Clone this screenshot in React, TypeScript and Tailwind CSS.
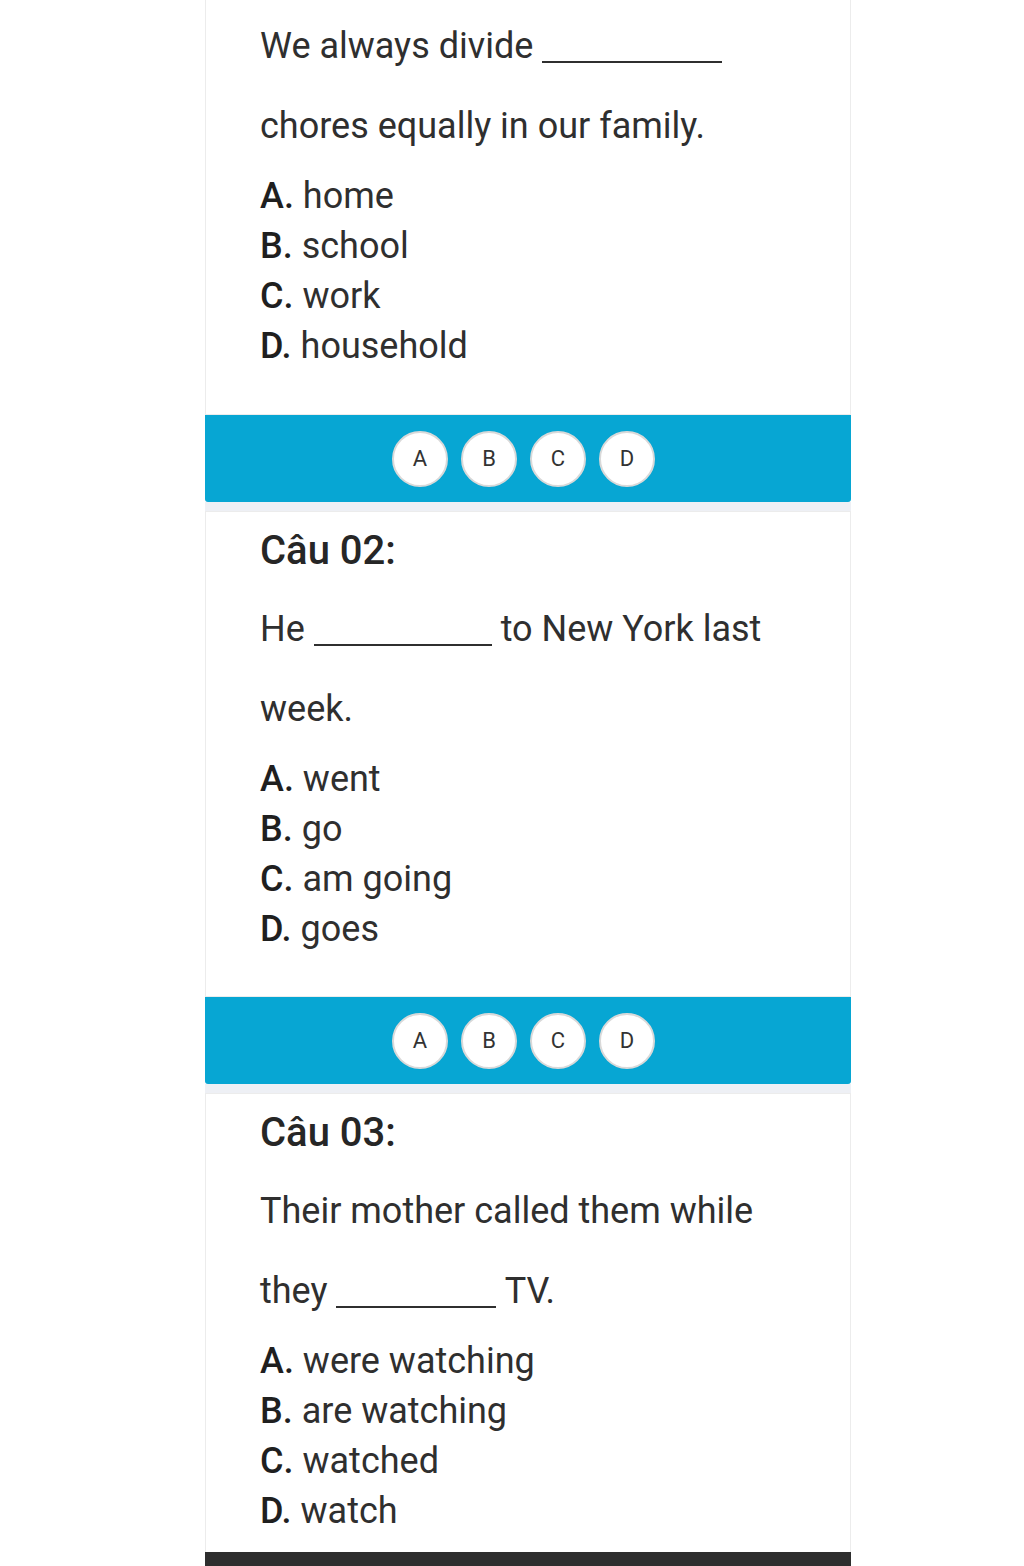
import React from 'react';

type Question = {
  title?: string;
  lines: React.ReactNode[];
  options: string[];
};

const Blank = ({ width }: { width: number }) => (
  <span
    className="inline-block border-b-2 border-[#2f2f2f] align-[-5px]"
    style={{ width }}
  />
);

const questions: Question[] = [
  {
    lines: [
      <>We always divide <Blank width={180} /></>,
      <>chores equally in our family.</>,
    ],
    options: ['home', 'school', 'work', 'household'],
  },
  {
    title: 'Câu 02:',
    lines: [
      <>He <Blank width={178} /> to New York last</>,
      <>week.</>,
    ],
    options: ['went', 'go', 'am going', 'goes'],
  },
  {
    title: 'Câu 03:',
    lines: [
      <>Their mother called them while</>,
      <>they <Blank width={160} /> TV.</>,
    ],
    options: ['were watching', 'are watching', 'watched', 'watch'],
  },
];

const letters = ['A', 'B', 'C', 'D'];

const AnswerBar = () => (
  <div className="h-[87px] bg-[#07a6d3] rounded-b-[3px] flex items-center justify-center gap-[13px] pr-[9px]">
    {letters.map((l) => (
      <div
        key={l}
        className="w-[56px] h-[56px] rounded-full bg-white border-2 border-[#d9d9d9] flex items-center justify-center text-[22px] text-[#333]"
      >
        {l}
      </div>
    ))}
  </div>
);

const QuestionCard = ({ q, first, last }: { q: Question; first: boolean; last: boolean }) => (
  <div
    className={`bg-white border border-[#ececec] px-[54px] ${first ? 'pt-[6px] border-t-0' : 'pt-[14px]'} ${last ? 'pb-[16px] border-b-0' : first ? 'pb-[43px]' : 'pb-[42px]'}`}
  >
    {q.title && (
      <h2 className="text-[40px] leading-[50px] font-medium text-[#262626] mb-[13px]">{q.title}</h2>
    )}
    {q.lines.map((line, i) => (
      <p key={i} className="text-[36px] leading-[80px] text-[#2f2f2f]">
        {line}
      </p>
    ))}
    <ul className="mt-[5px]">
      {q.options.map((opt, i) => (
        <li key={i} className="text-[36px] leading-[50px] text-[#2f2f2f]">
          <span className="font-medium text-[#1f1f1f]">{letters[i]}.</span> {opt}
        </li>
      ))}
    </ul>
  </div>
);

export default function App() {
  return (
    <div className="min-h-screen bg-white" style={{ fontFamily: 'Roboto, "Noto Sans", sans-serif' }}>
      <div className="ml-[205px] w-[646px]">
        {questions.map((q, i) => (
          <React.Fragment key={i}>
            <QuestionCard q={q} first={i === 0} last={i === questions.length - 1} />
            {i < questions.length - 1 && (
              <>
                <AnswerBar />
                <div className="h-[9px] bg-[#eef0f5]" />
              </>
            )}
          </React.Fragment>
        ))}
        <div className="h-[40px] bg-[#2e2e2e]" />
      </div>
    </div>
  );
}
